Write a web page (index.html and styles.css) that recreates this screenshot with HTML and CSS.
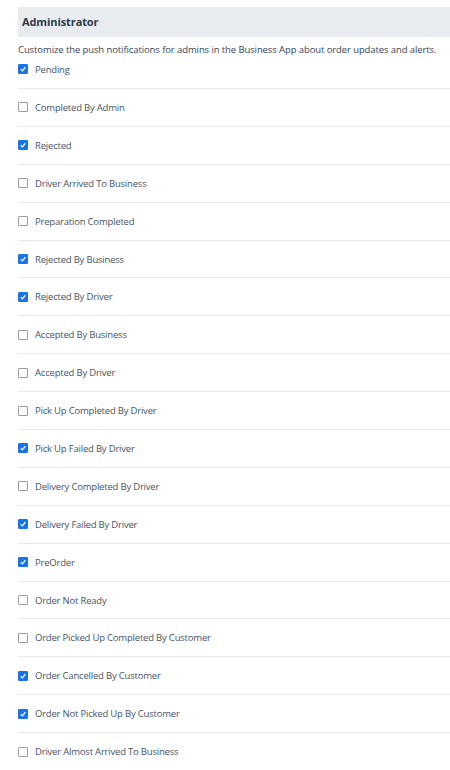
FILE: index.html
```html
<!DOCTYPE html>
<html lang="en">
<head>
  <meta charset="UTF-8" />
  <meta name="viewport" content="width=device-width, initial-scale=1.0" />
  <title>Administrator Notifications</title>
  <link rel="stylesheet" href="styles.css">
</head>
<body>
  <div class="section">
    <div class="section-header">Administrator</div>
    <p class="section-desc">Customize the push notifications for admins in the Business App about order updates and alerts.</p>
    <div id="event-list"></div>
  </div>

  <script>
    const events = [
      { name: "Pending", on: true },
      { name: "Completed By Admin", on: false },
      { name: "Rejected", on: true },
      { name: "Driver Arrived To Business", on: false },
      { name: "Preparation Completed", on: false },
      { name: "Rejected By Business", on: true },
      { name: "Rejected By Driver", on: true },
      { name: "Accepted By Business", on: false },
      { name: "Accepted By Driver", on: false },
      { name: "Pick Up Completed By Driver", on: false },
      { name: "Pick Up Failed By Driver", on: true },
      { name: "Delivery Completed By Driver", on: false },
      { name: "Delivery Failed By Driver", on: true },
      { name: "PreOrder", on: true },
      { name: "Order Not Ready", on: false },
      { name: "Order Picked Up Completed By Customer", on: false },
      { name: "Order Cancelled By Customer", on: true },
      { name: "Order Not Picked Up By Customer", on: true },
      { name: "Driver Almost Arrived To Business", on: false }
    ];
    const list = document.getElementById("event-list");
    events.forEach(ev => {
      const row = document.createElement("label");
      row.className = "event-row";
      row.innerHTML = `
        <input type="checkbox" ${ev.on ? "checked" : ""} />
        <span class="box">
          <svg viewBox="0 0 10 10"><path d="M2.2 5.3 L4.2 7.3 L7.9 2.8" /></svg>
        </span>
        <span class="event-name">${ev.name}</span>
      `;
      list.appendChild(row);
    });
  </script>
</body>
</html>
```

FILE: styles.css
```css
body {
  margin: 0;
  padding: 7px 0 0 18px;
  font-family: "Open Sans", Arial, sans-serif;
  color: #344050;
  background: #fff;
  overflow: hidden;
}
.section-header {
  height: 30px;
  line-height: 30px;
  padding-left: 4px;
  background-color: #e9ecef;
  font-size: 11px;
  font-weight: 700;
  letter-spacing: -0.1px;
  color: #2e3a48;
}
.section-desc {
  margin: 0;
  padding-top: 6px;
  font-size: 9.5px;
  line-height: 14px;
  letter-spacing: -0.1px;
  white-space: nowrap;
  color: #3b4554;
}
.event-row {
  display: flex;
  align-items: center;
  gap: 7px;
  box-sizing: border-box;
  height: 37.9px;
  border-bottom: 1px solid #e6e8eb;
  font-size: 9.5px;
  letter-spacing: -0.2px;
  cursor: pointer;
}
.event-row:first-child {
  height: 32px;
  padding-bottom: 7px;
}
.event-row input {
  display: none;
}
.box {
  width: 8px;
  height: 8px;
  border: 1px solid #9a9ea4;
  border-radius: 1px;
  display: flex;
}
.box svg {
  width: 100%;
  height: 100%;
  fill: none;
  stroke: #fff;
  stroke-width: 1.6;
  display: none;
}
.event-row input:checked + .box {
  background-color: #1a73e8;
  border-color: #1a73e8;
}
.event-row input:checked + .box svg {
  display: block;
}
.event-name {
  color: #4a5463;
}
```
